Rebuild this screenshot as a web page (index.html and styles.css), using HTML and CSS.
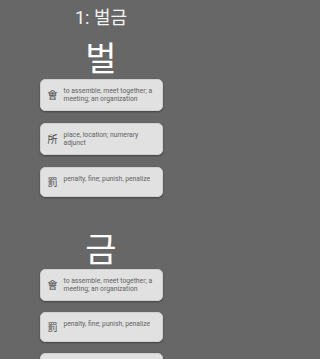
FILE: index.html
```html
<!DOCTYPE html>
<html lang="ko">
<head>
<meta charset="utf-8">
<title>1: 벌금</title>
<link rel="stylesheet" href="styles.css">
</head>
<body>
<div class="page">
  <h1 class="title">1: 벌금</h1>
  <section class="syllable">
    <div class="big">벌</div>
    <div class="cards">
      <div class="card"><span class="hanja">會</span><span class="gloss">to assemble, meet together; a meeting; an organization</span></div>
      <div class="card"><span class="hanja">所</span><span class="gloss">place, location; numerary adjunct</span></div>
      <div class="card"><span class="hanja">罰</span><span class="gloss">penalty, fine; punish, penalize</span></div>
    </div>
  </section>
  <section class="syllable second">
    <div class="big">금</div>
    <div class="cards">
      <div class="card"><span class="hanja">會</span><span class="gloss">to assemble, meet together; a meeting; an organization</span></div>
      <div class="card"><span class="hanja">罰</span><span class="gloss">penalty, fine; punish, penalize</span></div>
      <div class="card"><span class="hanja">金</span><span class="gloss">gold; metals in general; money</span></div>
    </div>
  </section>
</div>
</body>
</html>
```

FILE: styles.css
```css
html, body {
  margin: 0;
  padding: 0;
  background: #676767;
  height: 100%;
  overflow: hidden;
}
.page {
  width: 202px;
  font-family: Roboto, "Noto Sans CJK KR", sans-serif;
  display: flex;
  flex-direction: column;
  align-items: center;
  padding-top: 6px;
}
.title {
  margin: 0;
  font-size: 18px;
  line-height: 24px;
  font-weight: 400;
  color: #f2f2f2;
  font-family: Roboto, "Noto Sans CJK KR", sans-serif;
}
.syllable {
  display: flex;
  flex-direction: column;
  align-items: center;
  margin-top: 7px;
}
.syllable.second {
  margin-top: 31px;
}
.big {
  font-family: "Noto Sans CJK KR", sans-serif;
  font-size: 34px;
  line-height: 40px;
  color: #ffffff;
}
.cards {
  display: flex;
  flex-direction: column;
  gap: 12px;
  margin-top: 2px;
}
.second .cards {
  margin-top: 1px;
  gap: 11px;
}
.card {
  box-sizing: border-box;
  width: 123px;
  min-height: 30px;
  display: flex;
  align-items: flex-start;
  padding: 7px 4px 7px 7px;
  background: #e1e1e1;
  border: 1px solid #cfcfcf;
  border-radius: 5px;
  box-shadow: 0 1px 2px rgba(0, 0, 0, 0.35);
}
.hanja {
  flex: 0 0 16px;
  align-self: center;
  font-family: "Noto Sans CJK TC", "Noto Sans CJK KR", sans-serif;
  font-size: 10px;
  line-height: 12px;
  color: #444444;
}
.gloss {
  font-family: Roboto, sans-serif;
  font-size: 6.75px;
  line-height: 8px;
  color: #616161;
}
```
